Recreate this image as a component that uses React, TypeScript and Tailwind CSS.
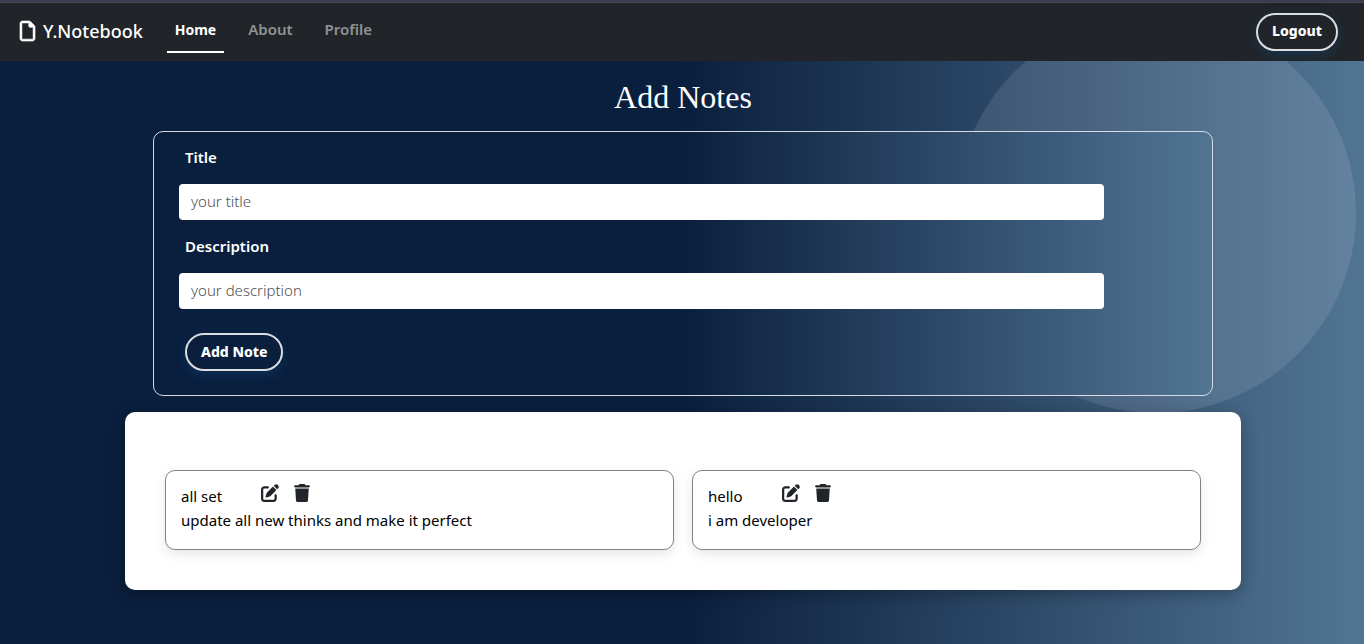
import { useId, useState } from "react";
import type { ButtonHTMLAttributes, FormEvent } from "react";
import { FaPenToSquare, FaRegFile, FaTrash } from "react-icons/fa6";

interface Note {
  id: number;
  title: string;
  description: string;
}

const initialNotes: Note[] = [
  { id: 1, title: "all set", description: "update all new thinks and make it perfect" },
  { id: 2, title: "hello", description: "i am developer" },
];

function PillButton(props: ButtonHTMLAttributes<HTMLButtonElement>) {
  return (
    <button
      {...props}
      className="h-[38px] rounded-full border-2 border-[#dbdde2] px-[14px] pb-0.5 text-[14px] font-extrabold text-white shadow-[0_4px_12px_rgba(13,71,130,0.4)]"
    />
  );
}

function Navbar() {
  return (
    <header className="flex items-center border-t-2 border-[#3a3e50] bg-[#212529] pr-[26px] pl-5 inset-shadow-[0_1px_0_#44454a]">
      <a href="#home" className="flex items-center gap-2 pb-0.5 text-lg font-medium text-white">
        <FaRegFile className="h-5 w-[15px] overflow-visible stroke-current stroke-[16px]" />
        Y.Notebook
      </a>
      <nav className="ml-6 flex gap-4 pt-1 pb-2 text-[15px] leading-6 font-semibold text-[#909294]">
        <a href="#home" className="border-b-2 border-white px-2 pt-3 pb-[9px] text-[14px] font-bold text-white">
          Home
        </a>
        <a href="#about" className="border-b-2 border-transparent px-2 pt-[11px] pb-2.5">
          About
        </a>
        <a href="#profile" className="border-b-2 border-transparent px-2 pt-[11px] pb-2.5">
          Profile
        </a>
      </nav>
      <div className="ml-auto">
        <PillButton type="button">Logout</PillButton>
      </div>
    </header>
  );
}

interface FieldProps {
  label: string;
  placeholder: string;
  value: string;
  onChange: (value: string) => void;
}

function Field({ label, placeholder, value, onChange }: FieldProps) {
  const id = useId();
  return (
    <div className="flex flex-col gap-[15px]">
      <label htmlFor={id} className="pl-1.5 text-[15px] leading-6 font-semibold text-white">
        {label}
      </label>
      <input
        id={id}
        type="text"
        placeholder={placeholder}
        value={value}
        onChange={(e) => onChange(e.target.value)}
        className="h-9 w-full rounded bg-white px-3 pb-0.5 text-[15px] font-light text-[#212529] placeholder:text-[#4d5053]"
      />
    </div>
  );
}

function NoteCard({ note, onDelete }: { note: Note; onDelete: () => void }) {
  return (
    <article className="rounded-[10px] border border-[#808183] bg-white px-[15px] pt-3 pb-[17px] text-[15px] leading-6 text-black shadow-[0_4px_12px_rgba(0,0,0,0.1)]">
      <div className="flex items-start gap-[39px]">
        <h2 className="pt-px">{note.title}</h2>
        <div className="flex gap-3.5 pt-px text-lg text-[#212529]">
          <button type="button" aria-label="Edit note">
            <FaPenToSquare />
          </button>
          <button type="button" aria-label="Delete note" onClick={onDelete}>
            <FaTrash />
          </button>
        </div>
      </div>
      <p>{note.description}</p>
    </article>
  );
}

export default function App() {
  const [notes, setNotes] = useState(initialNotes);
  const [title, setTitle] = useState("");
  const [description, setDescription] = useState("");

  const addNote = (e: FormEvent) => {
    e.preventDefault();
    if (!title) return;
    setNotes([...notes, { id: Date.now(), title, description }]);
    setTitle("");
    setDescription("");
  };

  return (
    <div className="flex min-h-screen flex-col font-['Noto_Sans',sans-serif]">
      <Navbar />
      <main className="relative flex-1 overflow-hidden bg-linear-to-r/srgb from-[#0a1f3d] from-50% to-[#527594] pt-4 pb-12 pl-0.5">
        <div className="absolute -top-12 right-2 size-[400px] rounded-full bg-white/10" />
        <div className="relative">
          <h1 className="text-center font-['Liberation_Serif',serif] text-[32px] leading-10 text-white">
            Add Notes
          </h1>
          <form
            onSubmit={addNote}
            className="mx-auto mt-3.5 max-w-[1060px] rounded-[10px] border border-[#d5dbe5] bg-linear-to-r/srgb from-[#0a1f3d] from-50% to-[#527594] pt-[13px] pr-[108px] pb-6 pl-[25px]"
          >
            <div className="flex flex-col gap-3.5">
              <Field label="Title" placeholder="your title" value={title} onChange={setTitle} />
              <Field
                label="Description"
                placeholder="your description"
                value={description}
                onChange={setDescription}
              />
            </div>
            <div className="mt-6 ml-1.5">
              <PillButton type="submit">Add Note</PillButton>
            </div>
          </form>
          <section className="mx-auto mt-4 grid max-w-[1116px] grid-cols-2 gap-[18px] rounded-[10px] bg-white px-10 pt-[58px] pb-10 shadow-[0_4px_16px_rgba(0,0,0,0.3)]">
            {notes.map((note) => (
              <NoteCard
                key={note.id}
                note={note}
                onDelete={() => setNotes(notes.filter((n) => n.id !== note.id))}
              />
            ))}
          </section>
        </div>
      </main>
    </div>
  );
}
